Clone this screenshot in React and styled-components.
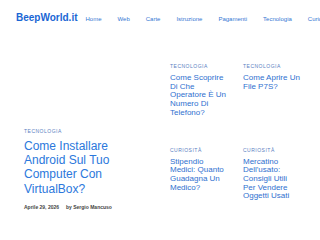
import React from "react";
import styled, { createGlobalStyle } from "styled-components";

const GlobalStyle = createGlobalStyle`
  html, body {
    margin: 0;
    padding: 0;
    background: #ffffff;
    font-family: "Liberation Sans", Arial, sans-serif;
  }
`;

const navItems = ["Home", "Web", "Carte", "Istruzione", "Pagamenti", "Tecnologia", "Curiosità"];

const sidePosts = [
  { cat: "Tecnologia", title: "Come Scoprire Di Che Operatore È Un Numero Di Telefono?" },
  { cat: "Tecnologia", title: "Come Aprire Un File P7S?" },
  { cat: "Curiosità", title: "Stipendio Medici: Quanto Guadagna Un Medico?" },
  { cat: "Curiosità", title: "Mercatino Dell'usato: Consigli Utili Per Vendere Oggetti Usati" },
];

const App = () => {
  return (
    <Page>
      <GlobalStyle />
      <Header>
        <Logo>BeepWorld.it</Logo>
        <Nav>
          {navItems.map((item) => (
            <NavLink key={item}>{item}</NavLink>
          ))}
        </Nav>
      </Header>
      <Main>
        <Hero>
          <Category>Tecnologia</Category>
          <HeroTitle>Come Installare Android Sul Tuo Computer Con VirtualBox?</HeroTitle>
          <Meta>
            <span>Aprile 29, 2026</span>
            <span>by Sergio Mancuso</span>
          </Meta>
        </Hero>
        <PostGrid>
          {sidePosts.map((post) => (
            <Post key={post.title}>
              <Category>{post.cat}</Category>
              <PostTitle>{post.title}</PostTitle>
            </Post>
          ))}
        </PostGrid>
      </Main>
    </Page>
  );
};

const Page = styled.div`
  width: 320px;
  height: 240px;
  overflow: hidden;
`;

const Header = styled.header`
  height: 40px;
  box-sizing: border-box;
  padding: 11px 0 0 16px;
  display: flex;
  align-items: baseline;
  white-space: nowrap;
`;

const Logo = styled.div`
  font-size: 10px;
  line-height: 13px;
  font-weight: 700;
  color: #1a66d4;
`;

const Nav = styled.nav`
  display: flex;
  gap: 16px;
  margin-left: 8px;
`;

const NavLink = styled.a`
  font-size: 6px;
  color: #3577d3;
  text-decoration: none;
`;

const Main = styled.main`
  display: flex;
  padding: 23px 0 0 24px;
`;

const Hero = styled.article`
  width: 120px;
  height: 147px;
  margin-right: 26px;
  display: flex;
  flex-direction: column;
  justify-content: flex-end;
`;

const Category = styled.div`
  font-size: 5px;
  line-height: 6px;
  letter-spacing: 0.5px;
  text-transform: uppercase;
  color: #5a80c2;
  margin-bottom: 5px;
`;

const HeroTitle = styled.h2`
  margin: 0 0 8px;
  font-size: 12px;
  line-height: 14.3px;
  font-weight: 400;
  color: #2b78dc;
`;

const Meta = styled.div`
  display: flex;
  gap: 7px;
  font-size: 5px;
  line-height: 6px;
  font-weight: 700;
  color: #444;
`;

const PostGrid = styled.div`
  display: grid;
  grid-template-columns: 58px 58px;
  column-gap: 15px;
  row-gap: 29px;
  align-content: start;
`;

const Post = styled.article`
  display: flex;
  flex-direction: column;
`;

const PostTitle = styled.h3`
  margin: 0;
  font-size: 8px;
  line-height: 8.7px;
  font-weight: 400;
  color: #2f70cf;
`;

export default App;
